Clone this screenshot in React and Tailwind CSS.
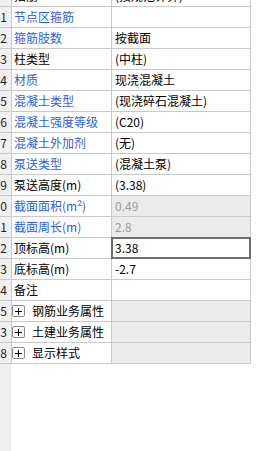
import React from "react";

const BLUE = "text-[#2f5fd9]";

const rows = [
  { n: "", label: "插筋", value: "(按规范计算)", blue: false },
  { n: "1", label: "节点区箍筋", value: "", blue: true },
  { n: "2", label: "箍筋肢数", value: "按截面", blue: true },
  { n: "3", label: "柱类型", value: "(中柱)", blue: false },
  { n: "4", label: "材质", value: "现浇混凝土", blue: true },
  { n: "5", label: "混凝土类型", value: "(现浇碎石混凝土)", blue: true },
  { n: "6", label: "混凝土强度等级", value: "(C20)", blue: true },
  { n: "7", label: "混凝土外加剂", value: "(无)", blue: true },
  { n: "8", label: "泵送类型", value: "(混凝土泵)", blue: true },
  { n: "9", label: "泵送高度(m)", value: "(3.38)", blue: false },
  { n: "0", label: "截面面积(m²)", value: "0.49", blue: true, ro: true },
  { n: "1", label: "截面周长(m)", value: "2.8", blue: true, ro: true },
  { n: "2", label: "顶标高(m)", value: "3.38", blue: false, sel: true },
  { n: "3", label: "底标高(m)", value: "-2.7", blue: false },
  { n: "4", label: "备注", value: "", blue: false },
  { n: "5", label: "钢筋业务属性", group: true },
  { n: "3", label: "土建业务属性", group: true },
  { n: "8", label: "显示样式", group: true },
];

function PlusBox() {
  return (
    <span className="flex h-[12px] w-[13px] shrink-0 items-center justify-center rounded-[2px] border border-[#8a8a8a] bg-white">
      <svg width="9" height="9" viewBox="0 0 9 9">
        <path d="M4.5 1v7M1 4.5h7" stroke="#000" strokeWidth="1" />
      </svg>
    </span>
  );
}

export default function App() {
  return (
    <div
      className="flex h-[451px] w-[270px] flex-col overflow-hidden bg-white text-[12px] leading-none text-black"
      style={{ fontFamily: '"Noto Sans CJK SC", "Noto Sans", sans-serif' }}
    >
      <div className="mt-[-14px] flex w-[251px] flex-col">
        {rows.map((r, i) => (
          <div key={i} className="flex h-[21px]">
            <div className="flex w-[12px] shrink-0 items-center justify-end border-r border-b border-[#c9c9c9] bg-[#f0f0f0] pr-[4px] text-[#222]">
              {r.n}
            </div>
            <div
              className={
                "flex w-[100px] shrink-0 items-center overflow-hidden whitespace-nowrap border-r border-b border-[#c9c9c9] bg-white " +
                (r.group ? "pl-0 " : "pl-[2px] ") +
                (r.blue ? BLUE : "text-black")
              }
            >
              {r.group ? (
                <span className="flex items-center gap-[7px] pl-[0px]">
                  <PlusBox />
                  <span>{r.label}</span>
                </span>
              ) : (
                r.label
              )}
            </div>
            <div
              className={
                "relative flex w-[139px] shrink-0 items-center whitespace-nowrap border-r border-b border-[#c9c9c9] pl-[3px] " +
                (r.group || r.ro ? "bg-[#ebebeb] " : "bg-white ") +
                (r.ro ? "text-[#9a9a9a]" : "text-black")
              }
            >
              {r.value}
              {r.sel && (
                <div className="absolute -bottom-px -left-px -right-px -top-px border-2 border-[#6e6e6e]" />
              )}
            </div>
          </div>
        ))}
      </div>
      <div className="w-[11px] flex-1 bg-[#f0f0f0]" />
    </div>
  );
}
